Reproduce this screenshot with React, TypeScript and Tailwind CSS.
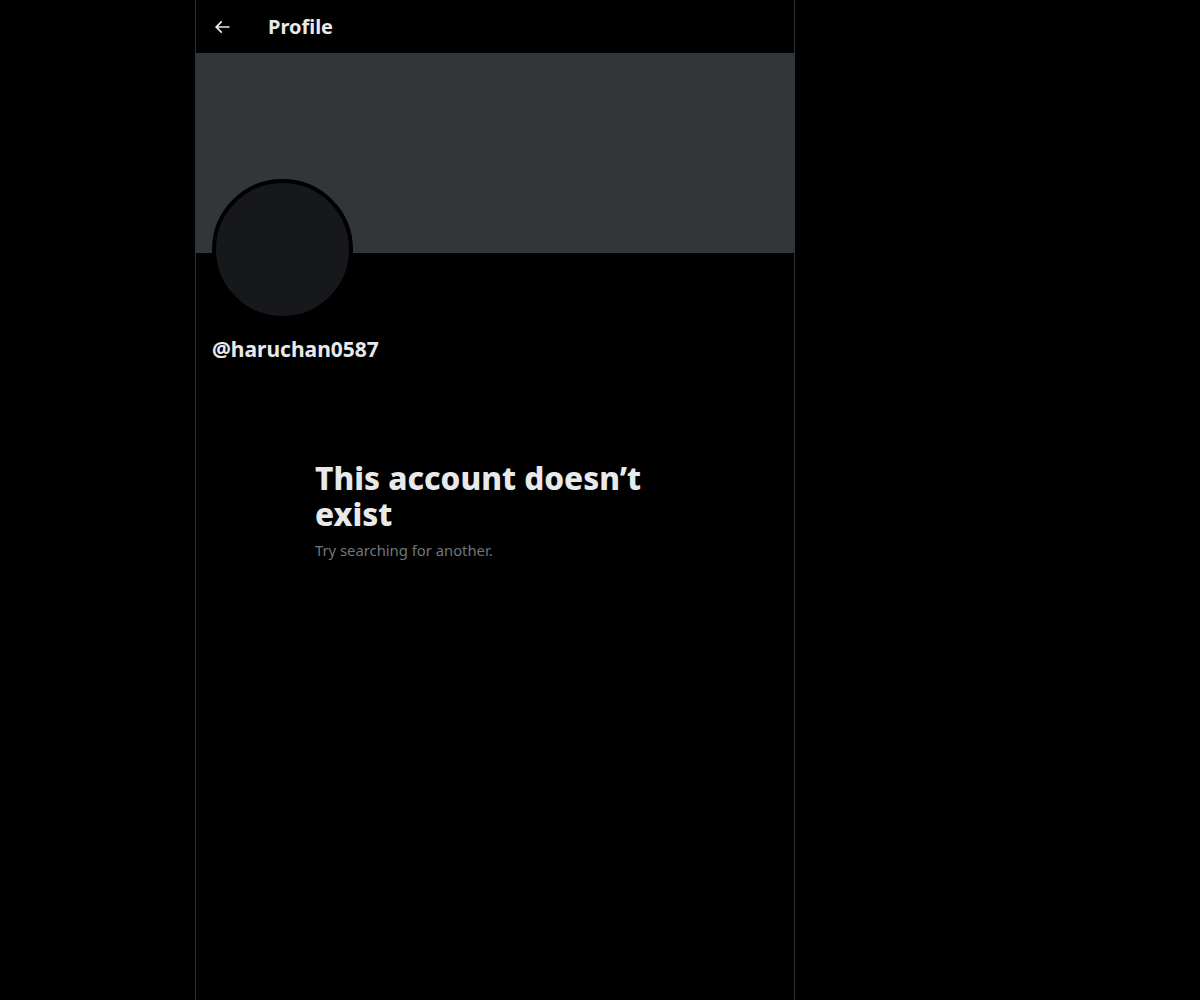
export default function App() {
  const font = { fontFamily: "'Noto Sans', Lato, sans-serif" };
  return (
    <div className="min-h-[1000px] w-full bg-black text-[#e7e9ea]" style={font}>
      <div className="ml-[195px] flex min-h-[1000px] w-[600px] flex-col border-x border-[#2f3336]">
        {/* header */}
        <div className="flex h-[53px] items-center pl-4">
          <svg viewBox="0 0 24 24" className="h-5 w-5 fill-[#e7e9ea]">
            <path d="M7.414 13l5.043 5.04-1.414 1.42L3.586 12l7.457-7.46 1.414 1.42L7.414 11H21v2H7.414z" />
          </svg>
          <h2 className="ml-9 text-[20px] font-bold leading-6">Profile</h2>
        </div>

        {/* banner */}
        <div className="h-[200px] bg-[#333639]" />

        {/* profile */}
        <div className="px-4">
          <div className="-mt-[74px] h-[141px] w-[141px] rounded-full border-4 border-black bg-[#16181c]" />
          <div className="mt-[16px] text-[21px] font-bold leading-[26px]">@haruchan0587</div>
        </div>

        {/* empty state */}
        <div className="mt-[98px] pl-[119px] pr-[120px]">
          <div className="text-[31.5px] font-extrabold leading-9">This account doesn’t exist</div>
          <div className="mt-2 text-[14.8px] leading-5 text-[#71767b]">Try searching for another.</div>
        </div>
      </div>
    </div>
  );
}
